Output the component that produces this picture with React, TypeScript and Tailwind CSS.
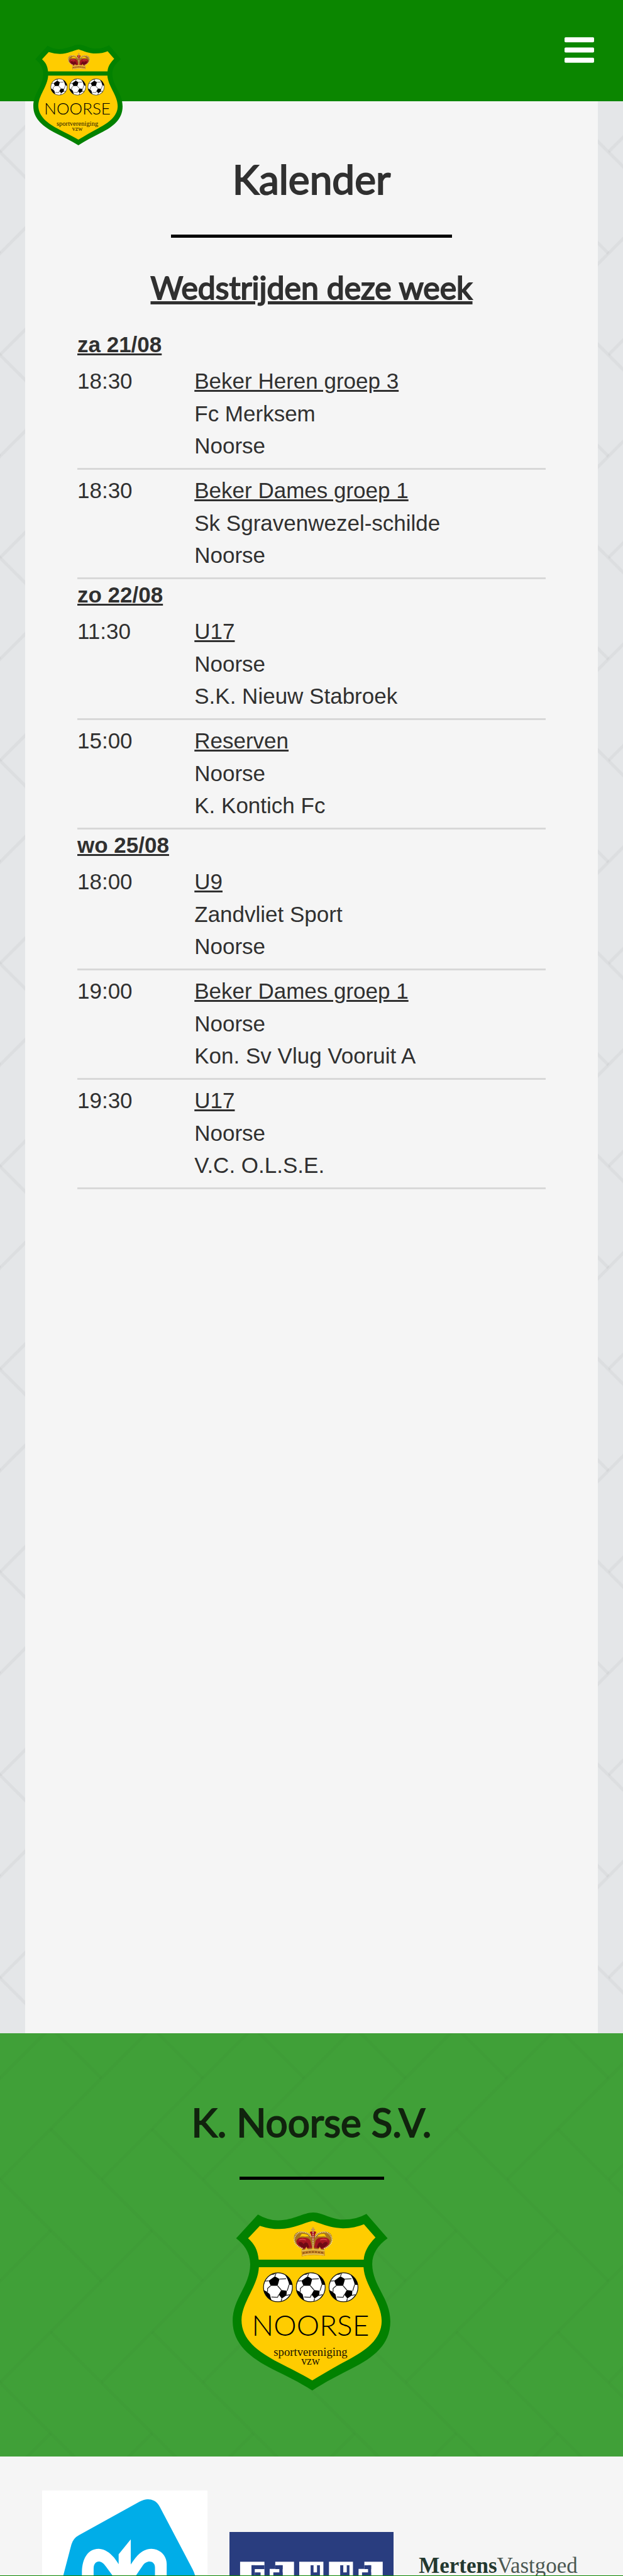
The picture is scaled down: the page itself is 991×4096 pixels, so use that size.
import React from 'react';

type Match = { time: string; title: string; home: string; away: string };
type Day = { label: string; matches: Match[] };

const days: Day[] = [
  {
    label: 'za 21/08',
    matches: [
      { time: '18:30', title: 'Beker Heren groep 3', home: 'Fc Merksem', away: 'Noorse' },
      { time: '18:30', title: 'Beker Dames groep 1', home: 'Sk Sgravenwezel-schilde', away: 'Noorse' },
    ],
  },
  {
    label: 'zo 22/08',
    matches: [
      { time: '11:30', title: 'U17', home: 'Noorse', away: 'S.K. Nieuw Stabroek' },
      { time: '15:00', title: 'Reserven', home: 'Noorse', away: 'K. Kontich Fc' },
    ],
  },
  {
    label: 'wo 25/08',
    matches: [
      { time: '18:00', title: 'U9', home: 'Zandvliet Sport', away: 'Noorse' },
      { time: '19:00', title: 'Beker Dames groep 1', home: 'Noorse', away: 'Kon. Sv Vlug Vooruit A' },
      { time: '19:30', title: 'U17', home: 'Noorse', away: 'V.C. O.L.S.E.' },
    ],
  },
];

/* Herringbone line texture; one tile is 2 x 4 units of 80.65px. */
function Herringbone({ id, shift, opacity }: { id: string; shift: number; opacity: number }) {
  return (
    <svg className="absolute inset-0 h-full w-full" aria-hidden="true">
      <defs>
        <pattern
          id={id}
          width="161.3"
          height="322.6"
          patternUnits="userSpaceOnUse"
          patternTransform={`translate(0 ${shift})`}
        >
          <g stroke="#000" strokeOpacity={opacity} strokeWidth="4.8" fill="none">
            <path d="M80.65 80.65L322.6 322.6M-80.65 80.65L161.3 322.6M-241.95 80.65L0 322.6" />
            <path d="M80.65 -241.95L322.6 0M-80.65 -241.95L161.3 0" />
            <path d="M0 161.3L241.95 -80.65M-161.3 161.3L80.65 -80.65" />
            <path d="M0 483.9L241.95 241.95M-161.3 483.9L80.65 241.95" />
          </g>
        </pattern>
      </defs>
      <rect width="100%" height="100%" fill={`url(#${id})`} />
    </svg>
  );
}

function Ball({ x }: { x: number }) {
  return (
    <g transform={`translate(${x} 445)`}>
      <circle r="75" fill="#fff" stroke="#151515" strokeWidth="4" />
      <g fill="#000">
        <path d="M-48 -34L-16 -57L8 -43L-2 -8L-38 -8Z" />
        <path d="M4 38L17 14L46 18L44 42L20 58Z" />
        <path d="M36 -66Q66 -52 75 -12L58 -14Q54 -38 36 -66Z" />
        <path d="M-75 14L-58 22L-42 36L-34 68Q-66 50 -75 14Z" />
        <path d="M46 60L66 34L60 46Z" />
        <path d="M-50 -56Q-30 -70 -12 -73L-20 -67L-34 -64Z" />
      </g>
      <path
        d="M8 -43L42 -44M58 -14L48 18M-2 -8L17 14M-38 -8L-54 6L-54 24M-34 50L-2 52L4 38M-16 -57L-10 -72M-48 -34L-68 -32M42 42L62 38M20 58L16 74"
        fill="none"
        stroke="#222"
        strokeWidth="4"
      />
    </g>
  );
}

function Crest({ className }: { className: string }) {
  return (
    <svg viewBox="72 57 818 923" className={className} role="img" aria-label="K. Noorse S.V.">
      <path
        fill="#028100"
        d="M90 191L203 68Q255 99 310 98C390 96 440 57 490 57C540 57 580 94 650 94Q712 94 766 64L876 191C825 228 796 270 796 325C798 440 890 500 890 622C890 745 800 810 690 866C615 905 545 940 485 980C415 935 350 905 280 870C165 812 72 740 72 620C72 500 162 440 163 325C161 262 130 222 90 191Z"
      />
      <path
        fill="#fc0"
        d="M152 191L213 126Q265 143 315 143C390 141 440 110 488 101C540 118 580 139 645 139Q705 138 753 118L813 187C775 225 755 262 752 302H207C202 252 185 220 152 191Z"
      />
      <path
        fill="#fc0"
        d="M208 341H751C757 440 845 520 845 620C845 715 760 775 670 822C605 856 545 892 485 928C425 892 370 866 310 835C200 778 118 715 118 615C120 520 203 440 208 341Z"
      />
      <g>
        <path fill="#a8741c" d="M390 196Q386 158 428 156Q470 158 478 178L490 148L500 178Q510 157 552 156Q592 160 588 200Q582 232 546 246L550 282Q490 270 430 284L432 246Q392 228 390 196Z" />
        <path fill="#ffcc00" d="M430 168Q456 166 468 180L448 182Q432 178 420 184ZM548 168Q522 166 510 180L530 182Q546 178 558 184Z" />
        <path fill="#a5161f" d="M402 206Q408 186 434 188Q464 184 476 204L484 240L440 246Q404 232 402 206ZM576 206Q570 186 544 188Q514 184 502 204L494 240L538 246Q574 232 576 206ZM472 158Q490 150 506 158L496 180L490 210L482 180Z" />
        <path fill="#6e0a14" d="M412 214Q430 204 440 222Q450 204 462 218L470 238L444 242Q418 234 412 214ZM566 214Q548 204 538 222Q528 204 516 218L508 238L534 242Q560 234 566 214Z" />
        <path fill="none" stroke="#d8404a" strokeWidth="5" d="M416 200Q434 192 452 200M526 200Q544 192 562 200" />
        <path fill="none" stroke="#e8d9b0" strokeWidth="6" strokeDasharray="5 4" d="M434 244Q388 224 392 194Q400 158 434 158Q466 160 480 184M546 244Q592 224 587 194Q578 158 545 158Q514 160 500 184M489 160V240" />
        <path fill="none" stroke="#c89b52" strokeWidth="8" d="M489 134V158M479 146H499" />
        <path fill="#c98a22" d="M428 254Q490 240 550 254L548 282Q490 270 432 284Z" />
        <path fill="none" stroke="#f2cf6a" strokeWidth="5" d="M430 256Q490 244 549 256M433 279Q490 266 547 278" />
        <path fill="none" stroke="#7b3f14" strokeWidth="5" strokeDasharray="9 7" d="M436 268Q490 255 544 268" />
        <path fill="#f0b92c" d="M446 252L454 234L462 250ZM482 250L489 232L497 250ZM516 250L524 234L532 252Z" />
      </g>
      <Ball x={307} />
      <Ball x={477} />
      <Ball x={647} />
      <text x="476" y="697" textAnchor="middle" fontSize="150" fontWeight="300" fontFamily="Lato, sans-serif" fill="#000">
        NOORSE
      </text>
      <g fontFamily="'Liberation Serif', serif" fill="#1c1500" textAnchor="middle">
        <text x="476" y="800" fontSize="61">sportvereniging</text>
        <text x="476" y="846" fontSize="58">vzw</text>
      </g>
    </svg>
  );
}

function AlbertHeijn() {
  return (
    <svg viewBox="43 30 860 860" className="block w-full" role="img" aria-label="Albert Heijn">
      <rect x="43" y="30" width="860" height="860" fill="#fff" />
      <path
        fill="#00ade8"
        d="M550 88Q590 66 625 83Q642 91 655 115L826 440Q842 470 842 500L780 780L200 780L130 560L195 312Q204 278 235 262Z"
      />
      <path
        fill="#fff"
        d="M250 700V450C252 385 280 333 338 333C385 335 418 376 441 413V362L504 284V415C530 375 562 333 612 333C660 335 690 370 691 412V700H630V430C630 395 588 388 565 422L530 474V700H412V476L375 426C350 388 314 392 311 432L309 700Z"
      />
    </svg>
  );
}

function Gamma() {
  return (
    <svg viewBox="1017 244 849 424" className="block w-full" role="img" aria-label="Gamma">
      <rect x="1017" y="244" width="849" height="424" fill="#293d7f" />
      <g fill="#fff">
        <rect x="1072" y="398" width="126" height="120" />
        <rect x="1254" y="398" width="97" height="120" />
        <rect x="1225" y="435" width="50" height="83" />
        <rect x="1378" y="398" width="125" height="120" />
        <rect x="1532" y="398" width="124" height="120" />
        <rect x="1715" y="398" width="95" height="120" />
        <rect x="1685" y="435" width="50" height="83" />
      </g>
      <g fill="#293d7f">
        <rect x="1131" y="416" width="67" height="20" />
        <rect x="1131" y="416" width="17" height="102" />
        <rect x="1148" y="453" width="30" height="65" />
        <rect x="1254" y="416" width="38" height="20" />
        <rect x="1275" y="416" width="17" height="102" />
        <rect x="1244" y="453" width="48" height="65" />
        <rect x="1437" y="416" width="48" height="102" />
        <rect x="1590" y="416" width="48" height="102" />
        <rect x="1715" y="416" width="35" height="20" />
        <rect x="1734" y="416" width="16" height="102" />
        <rect x="1703" y="453" width="47" height="65" />
      </g>
      <g fill="#fff">
        <rect x="1452" y="416" width="18" height="37" />
        <rect x="1606" y="416" width="18" height="37" />
      </g>
    </svg>
  );
}

export default function App() {
  return (
    <div className="flex min-h-screen flex-col bg-[#f5f5f5] font-['Liberation_Sans',Arial,sans-serif] text-[#303030]">
      <header className="relative z-10 flex h-[161px] items-start justify-between bg-[#0b8600] pr-[46px] pl-[53px]">
        <a href="#home" className="mt-[70px] block">
          <Crest className="h-[162px] w-[142px]" />
        </a>
        <button type="button" aria-label="Menu" className="mt-[59px] block">
          <svg viewBox="0 0 52 45" className="h-[41px] w-[47px]" fill="#fff">
            <rect width="52" height="9" rx="2" />
            <rect y="18" width="52" height="9" rx="2" />
            <rect y="36" width="52" height="9" rx="2" />
          </svg>
        </button>
      </header>

      <main className="relative bg-[#e4e6e8] px-[40px]">
        <Herringbone id="page-lines" shift={-80.65} opacity={0.035} />
        <div className="relative min-h-[3072px] bg-[#f5f5f5] px-[83px] pt-[84px]">
          <h1 className="text-center font-[Lato,sans-serif] text-[64px] leading-[80px] font-normal [-webkit-text-stroke:2px_currentColor]">
            Kalender
          </h1>
          <hr className="mx-auto mt-[48px] h-[5px] w-3/5 border-0 bg-black" />
          <h2 className="mt-[47px] text-center font-[Lato,sans-serif] text-[50px] leading-[64px] font-normal underline [-webkit-text-stroke:2px_currentColor]">
            Wedstrijden deze week
          </h2>

          <div className="mt-[34px] text-[35px] leading-[51px]">
            {days.map((day) => (
              <section key={day.label}>
                <h3 className="leading-[50px] font-bold underline">{day.label}</h3>
                <ul>
                  {day.matches.map((m) => (
                    <li key={m.time + m.title} className="flex border-b-3 border-[#d8d8d8] pt-[7px] pb-[10px]">
                      <time className="w-1/4 leading-[52px]">{m.time}</time>
                      <div className="flex-1">
                        <a href="#wedstrijd" className="block leading-[52px] underline">
                          {m.title}
                        </a>
                        <p>{m.home}</p>
                        <p>{m.away}</p>
                      </div>
                    </li>
                  ))}
                </ul>
              </section>
            ))}
          </div>
        </div>
      </main>

      <footer>
        <div className="relative bg-[#40a038]">
          <Herringbone id="footer-lines" shift={71.5} opacity={0.018} />
          <div className="relative flex flex-col items-center pt-[101px] pb-[105px]">
            <h2 className="font-[Lato,sans-serif] text-[62px] leading-[80px] font-normal text-[#11230e] [-webkit-text-stroke:2px_currentColor]">
              K. Noorse S.V.
            </h2>
            <hr className="mt-[47px] h-[5px] w-[230px] border-0 bg-black" />
            <Crest className="mt-[52px] h-[283px] w-[251px]" />
          </div>
        </div>

        <div className="h-[190px] overflow-hidden border-b border-[#0b8600] px-[50px] pt-[54px]">
          <div className="grid grid-cols-3 items-center">
            <a href="#albert-heijn" className="px-[17px]">
              <AlbertHeijn />
            </a>
            <a href="#gamma" className="px-[18px]">
              <Gamma />
            </a>
            <a
              href="#mertens"
              className="pb-[24px] text-center font-['Liberation_Serif',serif] text-[35px] leading-[40px] whitespace-nowrap text-[#23382f]"
            >
              <b>Mertens</b>
              <span className="text-[#4b5853]">Vastgoed</span>
            </a>
          </div>
        </div>
      </footer>
    </div>
  );
}
